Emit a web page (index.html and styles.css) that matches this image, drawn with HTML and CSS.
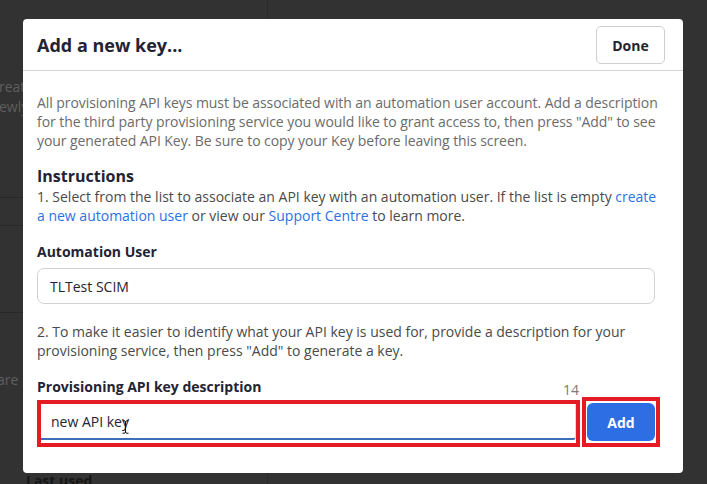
FILE: index.html
```html
<!DOCTYPE html>
<html lang="en">
<head>
<meta charset="utf-8">
<title>Provisioning API keys</title>
<link rel="stylesheet" href="styles.css">
</head>
<body>
<div class="page">
  <aside class="side">
    <div class="side-intro">
      <p>reate a new provisioning key</p>
      <p>ewly generated keys appear</p>
    </div>
    <div class="side-row side-row-a"></div>
    <div class="side-row side-row-b"></div>
    <div class="side-row side-row-c"></div>
    <p class="side-note">are</p>
    <h4 class="side-head">Last used</h4>
  </aside>
  <main class="main"></main>
</div>

<div class="modal" role="dialog" aria-labelledby="modal-title">
  <header class="modal-header">
    <h2 id="modal-title" class="modal-title">Add a new key...</h2>
    <button class="btn-done" type="button">Done</button>
  </header>
  <div class="modal-body">
    <p class="lead">All provisioning API keys must be associated with an automation user account. Add a description for the third party provisioning service you would like to grant access to, then press "Add" to see your generated API Key. Be sure to copy your Key before leaving this screen.</p>

    <h3 class="section-title">Instructions</h3>
    <p class="step">1. Select from the list to associate an API key with an automation user. If the list is empty <a href="#">create a new automation user</a> or view our <a href="#">Support Centre</a> to learn more.</p>

    <label class="field-label" for="auto-user">Automation User</label>
    <div class="select-box" id="auto-user">TLTest SCIM</div>

    <p class="step step-2">2. To make it easier to identify what your API key is used for, provide a description for your provisioning service, then press "Add" to generate a key.</p>

    <div class="desc-field">
      <div class="desc-head">
        <label class="field-label" for="key-desc">Provisioning API key description</label>
        <span class="char-count">14</span>
      </div>
      <div class="desc-row">
        <div class="mark mark-input">
          <div class="text-input">
            <input id="key-desc" type="text" value="new API key">
            <svg class="ibeam" width="7" height="14" viewBox="0 0 7 14" aria-hidden="true">
              <path d="M0.5 0.8h2.2M4.3 0.8h2.2M3.5 1.3v11.4M0.5 13.2h2.2M4.3 13.2h2.2M2.4 1 L3.5 1.6 L4.6 1 M2.4 13 L3.5 12.4 L4.6 13" fill="none" stroke="#111" stroke-width="1"/>
            </svg>
          </div>
        </div>
        <div class="mark mark-btn">
          <button class="btn-add" type="button">Add</button>
        </div>
      </div>
    </div>
  </div>
</div>
</body>
</html>
```

FILE: styles.css
```css
* {
  box-sizing: border-box;
}

html, body {
  margin: 0;
  height: 100%;
}

body {
  background: #323232;
  font-family: "Open Sans", "Noto Sans", sans-serif;
  font-size: 14px;
  overflow: hidden;
  position: relative;
}

/* dimmed page behind the dialog */
.page {
  display: flex;
  height: 100%;
}

.side {
  width: 268px;
  border-right: 1px solid #2a2a2a;
  display: flex;
  flex-direction: column;
  color: #5e5e5e;
}

.side > * {
  flex-shrink: 0;
}

.side p {
  margin: 0;
  white-space: nowrap;
  line-height: 20px;
}

.side-intro {
  padding-top: 77px;
  margin-left: -1px;
}

.side-row {
  border-top: 1px solid #282828;
}

.side-row-a {
  margin-top: 80px;
  height: 28px;
}

.side-row-b {
  height: 87px;
}

.side-row-c {
  height: 37px;
}

.side p.side-note {
  margin: 21px 0 0 -3px;
}

.side-head {
  margin: 81px 0 0 26px;
  font-size: 14px;
  line-height: 19px;
  font-weight: 700;
  color: #161616;
}

.main {
  flex: 1;
}

/* dialog */
.modal {
  position: absolute;
  left: 23px;
  top: 19px;
  width: 660px;
  height: 454px;
  background: #fff;
  border-radius: 4px;
  color: #232333;
}

.modal-header {
  height: 52px;
  display: flex;
  align-items: center;
  justify-content: space-between;
  padding: 0 18px 0 14px;
  border-bottom: 1px solid #d6d6d6;
}

.modal-title {
  margin: 0;
  font-size: 18px;
  font-weight: 700;
  color: #232333;
}

.btn-done {
  width: 69px;
  height: 38px;
  border: 1px solid #cfcfcf;
  border-radius: 5px;
  background: #fff;
  font-family: inherit;
  font-size: 14px;
  font-weight: 700;
  color: #232333;
  margin-top: 1px;
}

.modal-body {
  padding: 22px 18px 0 14px;
}

.lead,
.step {
  margin: 0;
  line-height: 19px;
  color: #6b6b6b;
}

.lead {
  letter-spacing: -0.07px;
  margin-right: -4px;
}

.step {
  color: #4a4a4a;
}

.step a {
  color: #2a72e4;
  text-decoration: none;
}

.section-title {
  margin: 15px 0 0;
  font-size: 16px;
  line-height: 22px;
  font-weight: 700;
  color: #232333;
}

.field-label {
  display: block;
  font-size: 14px;
  font-weight: 700;
  line-height: 19px;
  color: #232333;
}

.step + .field-label {
  margin-top: 17px;
}

.select-box {
  margin-top: 7px;
  width: 618px;
  height: 36px;
  border: 1px solid #d2d2d2;
  border-radius: 7px;
  padding: 0 12px;
  display: flex;
  align-items: center;
  color: #232333;
}

.step-2 {
  margin-top: 18px;
}

.desc-field {
  margin-top: 17px;
}

.desc-head {
  width: 543px;
  display: flex;
  justify-content: space-between;
  align-items: flex-end;
}

.char-count {
  font-size: 14px;
  color: #7a7a7a;
  line-height: 16px;
  margin-right: 1px;
  margin-bottom: -2px;
}

.desc-row {
  display: flex;
  align-items: center;
  margin-top: 1px;
}

/* red highlight frames */
.mark {
  border: 4px solid #e41b24;
  background: #fff;
}

.mark-input {
  width: 543px;
  height: 47px;
  margin-top: 3px;
}

.text-input {
  position: relative;
  height: 36px;
  border-bottom: 2px solid #3d6fb8;
  border-right: 1px solid #dcdcdc;
  border-radius: 0 0 3px 0;
}

.text-input input {
  width: 100%;
  height: 100%;
  border: 0;
  outline: 0;
  padding: 0 10px;
  font-family: inherit;
  font-size: 14px;
  color: #232333;
  background: transparent;
}

.ibeam {
  position: absolute;
  left: 81px;
  top: 16px;
}

.mark-btn {
  margin-left: 2px;
  width: 78px;
  height: 50px;
  padding: 2px 1px;
}

.btn-add {
  width: 68px;
  height: 38px;
  border: 0;
  border-radius: 6px;
  background: #2d6ee5;
  color: #fff;
  font-family: inherit;
  font-size: 14px;
  font-weight: 700;
}
```
